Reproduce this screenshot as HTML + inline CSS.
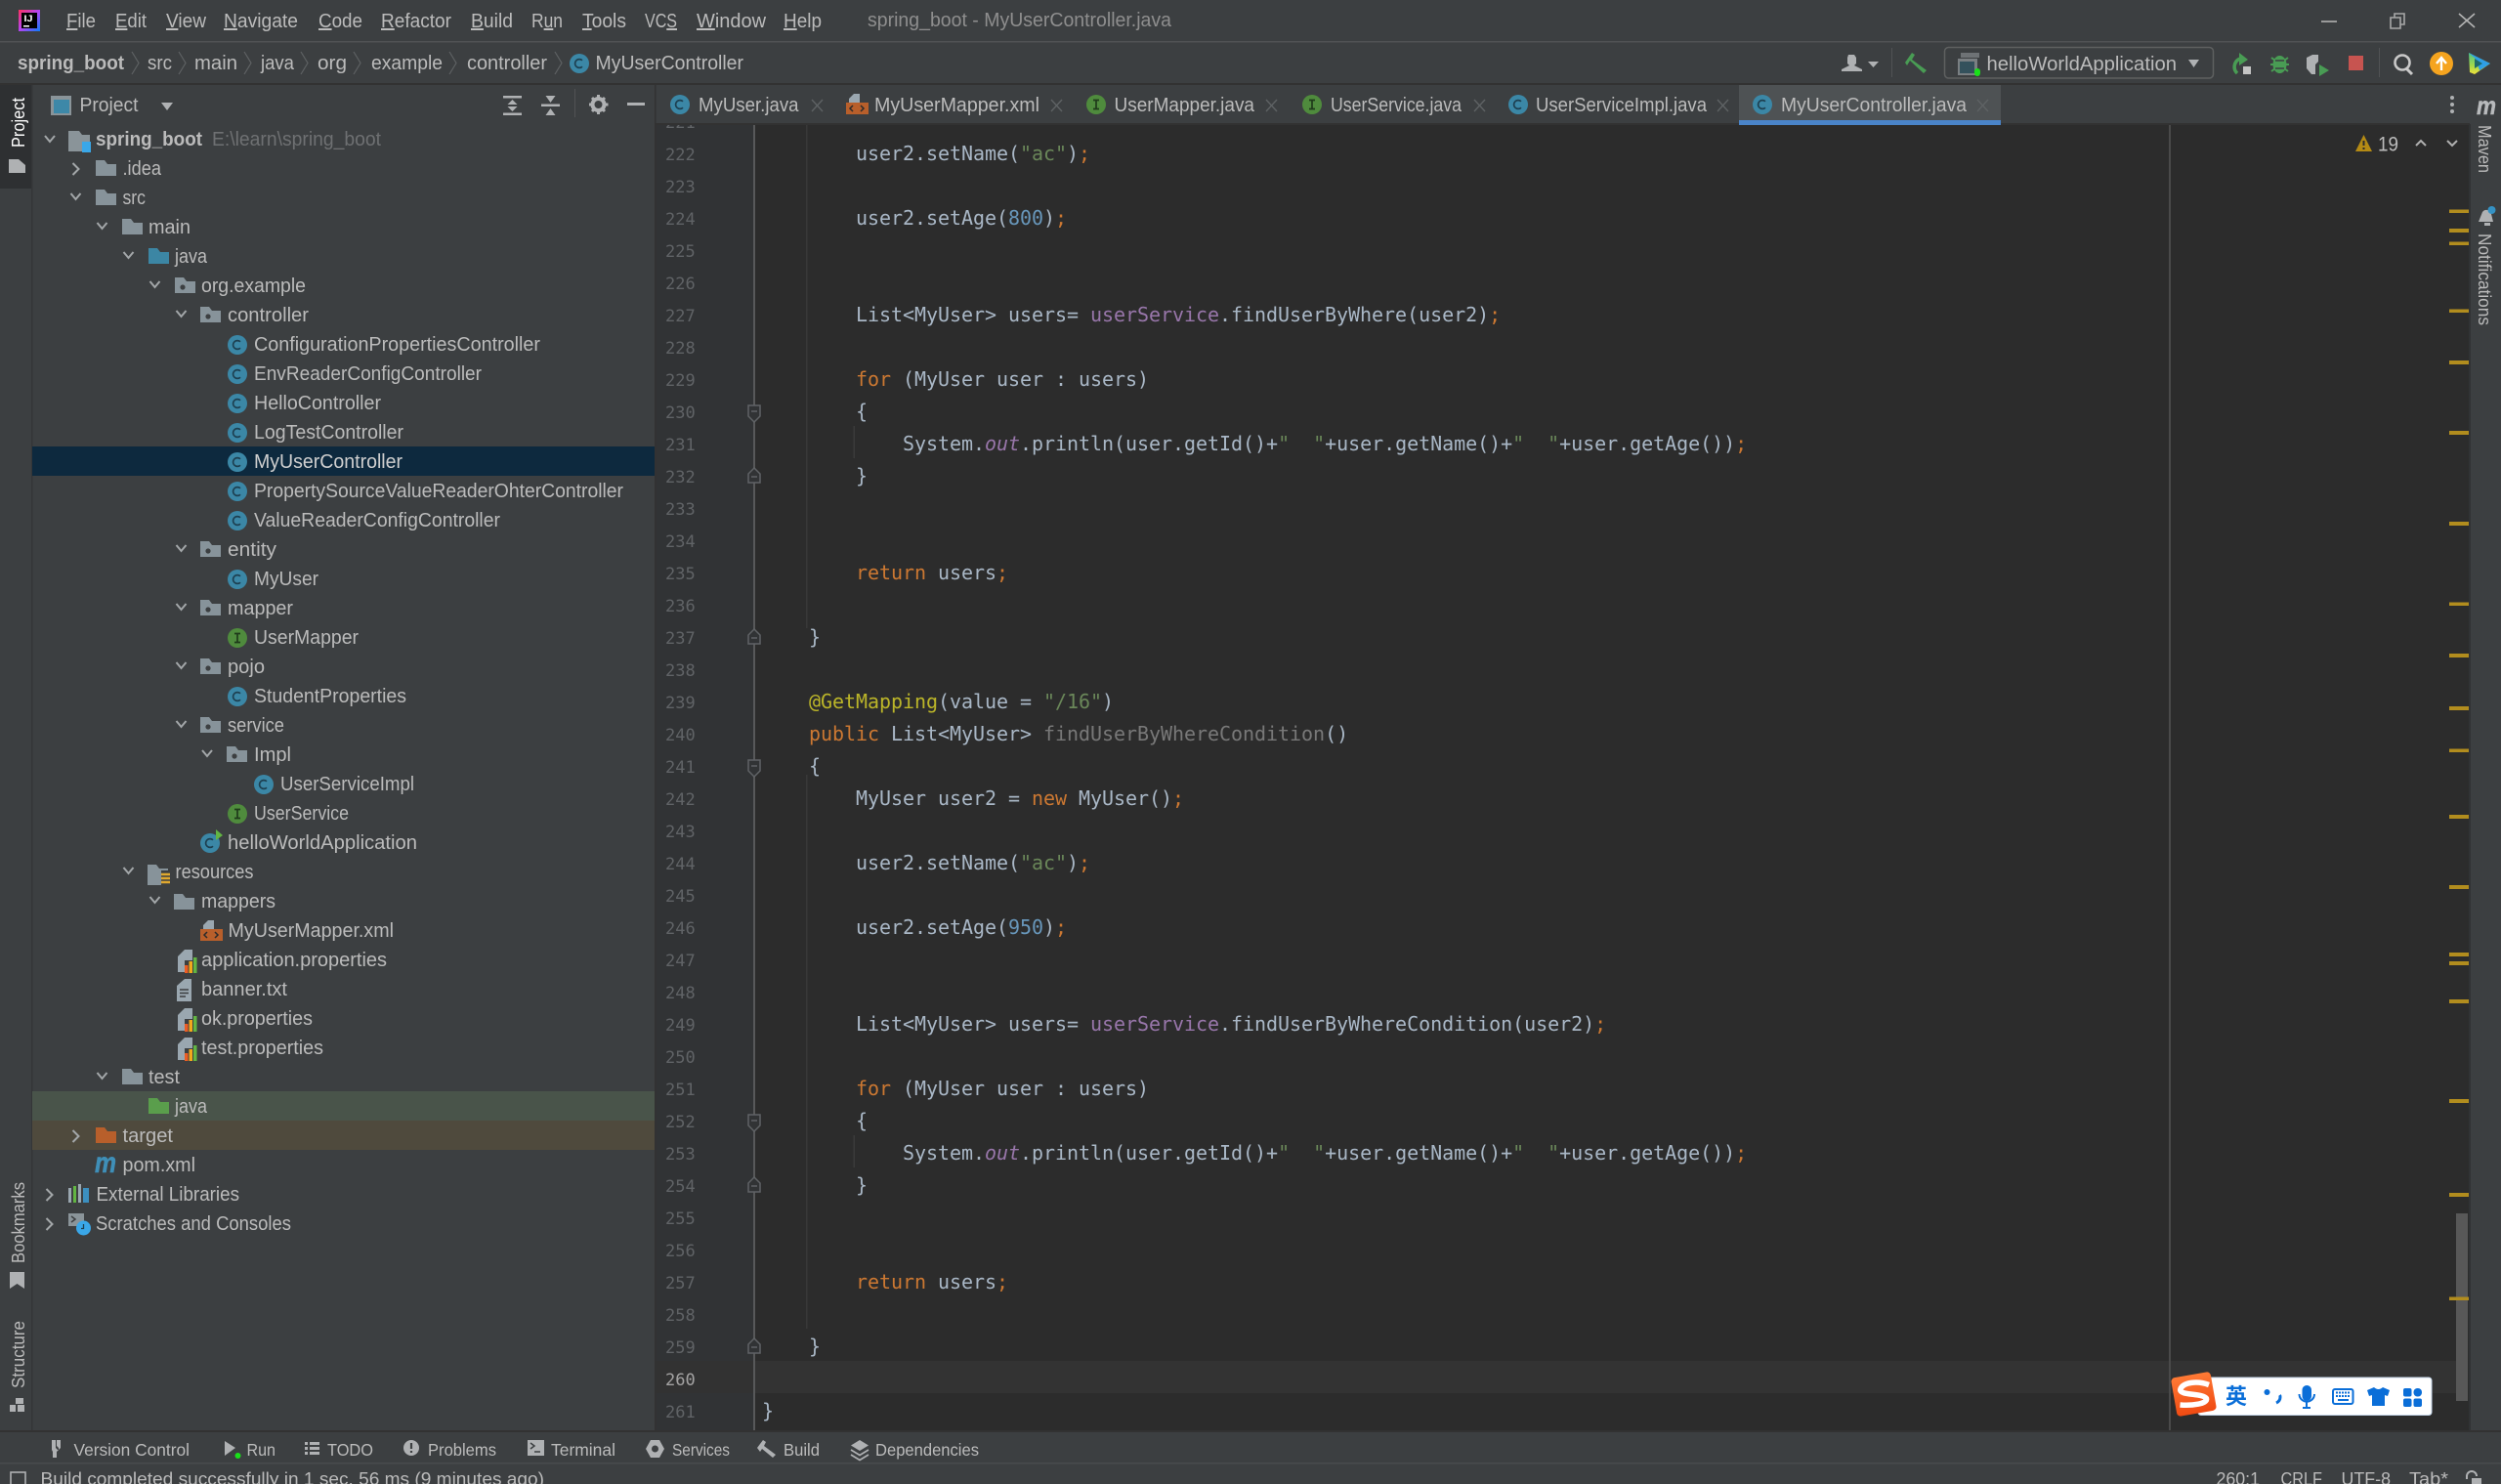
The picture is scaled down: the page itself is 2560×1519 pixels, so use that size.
<!DOCTYPE html>
<html><head><meta charset="utf-8"><title>spring_boot - MyUserController.java</title>
<style>
html,body{margin:0;padding:0;background:#3c3f41;width:2560px;height:1519px;overflow:hidden}
svg{display:block}
text{font-family:"Liberation Sans",sans-serif;font-size:20px;fill:#bbbbbb;white-space:pre}
.b{font-weight:bold}
.m{fill:#bbbbbb}
.s{font-size:17.5px}
.v{font-size:18px}
.ln{font-family:"DejaVu Sans Mono","Liberation Mono",monospace;font-size:17px;fill:#606366}
.c{font-family:"DejaVu Sans Mono","Liberation Mono",monospace;font-size:20px;fill:#a9b7c6;letter-spacing:-.04px}
.k{fill:#cc7832}.str{fill:#6a8759}.n{fill:#6897bb}.f{fill:#9876aa}.a{fill:#bbb529}.u{fill:#787878}.fi{fill:#9876aa;font-style:italic}
</style></head><body>
<svg xmlns="http://www.w3.org/2000/svg" width="2560" height="1519" viewBox="0 0 2560 1519">
<defs>
<linearGradient id="ij" x1="0" y1="0" x2="1" y2="1"><stop offset="0" stop-color="#fe315d"/><stop offset=".5" stop-color="#b345f1"/><stop offset="1" stop-color="#087cfa"/></linearGradient>
<linearGradient id="sg" x1="0" y1="0" x2="0" y2="1"><stop offset="0" stop-color="#ff7a35"/><stop offset="1" stop-color="#f04a12"/></linearGradient>
<linearGradient id="tb" x1="0" y1="0" x2="0" y2="1"><stop offset="0" stop-color="#4cc38a"/><stop offset=".6" stop-color="#a5d84a"/><stop offset="1" stop-color="#f2e23c"/></linearGradient>
<g id="ci"><circle cx="10" cy="10" r="10" fill="#3b87a6"/><path d="M13 6.8A4.4 4.4 0 1 0 13 13.2" fill="none" stroke="#1d3f50" stroke-width="1.7"/></g>
<g id="ii"><circle cx="10" cy="10" r="10" fill="#4f8b3d"/><path d="M7 5.5h6M10 5.5v9M7 14.5h6" fill="none" stroke="#1f3a1a" stroke-width="1.7"/></g>
<path id="d" d="M1 1L6 7L11 1" fill="none" stroke="#a3a7a9" stroke-width="2"/>
<path id="r" d="M1 0L7 6L1 12" fill="none" stroke="#a3a7a9" stroke-width="2"/>
<path id="fo" d="M0 0h9l3 4h9v12H0z" fill="#87939a"/>
<g id="pk"><path d="M0 0h9l3 4h9v12H0z" fill="#87939a"/><circle cx="8" cy="10" r="2.6" fill="#3c3f41"/></g>
<g id="xm"><path d="M8 0h6v9H3V5z" fill="#9aa7b0"/><rect x="0" y="9" width="23" height="12" fill="#b85f2b"/><path d="M7 12l-3 3l3 3M15 12l3 3l-3 3" fill="none" stroke="#2b2b2b" stroke-width="1.5"/></g>
<g id="pr"><path d="M8 0h8v23H1V7z" fill="#9aa7b0"/><rect x="8" y="11" width="13" height="13" fill="#3c3f41"/><rect x="8" y="16" width="3.5" height="8" fill="#ec5d24"/><rect x="12.5" y="12" width="3.5" height="12" fill="#f1a91c"/><rect x="17" y="8" width="3.5" height="16" fill="#62b543"/></g>
<g id="fa"><path d="M1 1H13V12L7 18L1 12z" fill="#313335" stroke="#606366" stroke-width="1.5"/><path d="M4 7h6" stroke="#606366" stroke-width="1.5"/></g>
<g id="fb"><path d="M7 1L13 7V16H1V7z" fill="#313335" stroke="#606366" stroke-width="1.5"/><path d="M4 10h6" stroke="#606366" stroke-width="1.5"/></g>
<path id="x" d="M0 0L11 12M11 0L0 12" stroke="#5e6264" stroke-width="1.4" fill="none"/>
<path id="chev" d="M0 0L7 11.5L0 23" fill="none" stroke="#5e6163" stroke-width="1.2"/>
</defs>

<!-- base -->
<rect width="2560" height="1519" fill="#3c3f41"/>

<!-- editor -->
<rect x="670" y="127" width="1857" height="1338" fill="#2c2c2c"/>
<rect x="670" y="127" width="102" height="1338" fill="#313335"/>
<rect x="773" y="1393" width="1753" height="33" fill="#333333"/>
<rect x="670" y="1393" width="102" height="33" fill="#323232"/>
<rect x="825" y="128" width="1.5" height="515" fill="#383838"/>
<rect x="825" y="793" width="1.5" height="567" fill="#383838"/>
<rect x="873.5" y="436" width="1.5" height="33" fill="#3a3a3a"/>
<rect x="873.5" y="1162" width="1.5" height="33" fill="#3a3a3a"/>
<rect x="2220" y="127" width="2" height="1338" fill="#4a4a4a"/>
<rect x="771" y="127" width="2" height="1338" fill="#58595a"/>
<!-- scrollbar + stripes -->
<rect x="2527" y="127" width="2" height="1338" fill="#313335"/>
<rect x="2514" y="1242" width="12" height="192" fill="#585858"/>
<g fill="#b28d1e">
<rect x="2507" y="214.500" width="20" height="3.500"/><rect x="2507" y="234" width="20" height="4"/><rect x="2507" y="247.500" width="20" height="3.500"/><rect x="2507" y="316.500" width="20" height="3.500"/><rect x="2507" y="369" width="20" height="4"/><rect x="2507" y="441" width="20" height="4"/><rect x="2507" y="534" width="20" height="4"/><rect x="2507" y="616.500" width="20" height="3.500"/><rect x="2507" y="669" width="20" height="4"/><rect x="2507" y="723" width="20" height="4"/><rect x="2507" y="766.500" width="20" height="3.500"/><rect x="2507" y="834" width="20" height="4"/><rect x="2507" y="906" width="20" height="4"/><rect x="2507" y="975" width="20" height="4"/><rect x="2507" y="984" width="20" height="4"/><rect x="2507" y="1023" width="20" height="4"/><rect x="2507" y="1125" width="20" height="4"/><rect x="2507" y="1221" width="20" height="4"/><rect x="2507" y="1327.500" width="20" height="3.500"/>
</g>

<!-- line numbers -->
<g class="ln-g">
<text class="ln" x="681" y="131">221</text><text class="ln" x="681" y="164">222</text><text class="ln" x="681" y="197">223</text><text class="ln" x="681" y="230">224</text><text class="ln" x="681" y="263">225</text><text class="ln" x="681" y="296">226</text><text class="ln" x="681" y="329">227</text><text class="ln" x="681" y="362">228</text><text class="ln" x="681" y="395">229</text><text class="ln" x="681" y="428">230</text><text class="ln" x="681" y="461">231</text><text class="ln" x="681" y="494">232</text><text class="ln" x="681" y="527">233</text><text class="ln" x="681" y="560">234</text><text class="ln" x="681" y="593">235</text><text class="ln" x="681" y="626">236</text><text class="ln" x="681" y="659">237</text><text class="ln" x="681" y="692">238</text><text class="ln" x="681" y="725">239</text><text class="ln" x="681" y="758">240</text><text class="ln" x="681" y="791">241</text><text class="ln" x="681" y="824">242</text><text class="ln" x="681" y="857">243</text><text class="ln" x="681" y="890">244</text><text class="ln" x="681" y="923">245</text><text class="ln" x="681" y="956">246</text><text class="ln" x="681" y="989">247</text><text class="ln" x="681" y="1022">248</text><text class="ln" x="681" y="1055">249</text><text class="ln" x="681" y="1088">250</text><text class="ln" x="681" y="1121">251</text><text class="ln" x="681" y="1154">252</text><text class="ln" x="681" y="1187">253</text><text class="ln" x="681" y="1220">254</text><text class="ln" x="681" y="1253">255</text><text class="ln" x="681" y="1286">256</text><text class="ln" x="681" y="1319">257</text><text class="ln" x="681" y="1352">258</text><text class="ln" x="681" y="1385">259</text><text class="ln" x="681" y="1418" style="fill:#a4a3a3">260</text><text class="ln" x="681" y="1451">261</text>
</g>

<!-- fold markers -->
<use href="#fa" x="765" y="414"/><use href="#fb" x="765" y="478"/><use href="#fb" x="765" y="643"/><use href="#fa" x="765" y="777"/><use href="#fa" x="765" y="1140"/><use href="#fb" x="765" y="1204"/><use href="#fb" x="765" y="1369"/>

<!-- code -->
<text class="c" x="876" y="164">user2.setName(<tspan class="str">"ac"</tspan>)<tspan class="k">;</tspan></text>
<text class="c" x="876" y="230">user2.setAge(<tspan class="n">800</tspan>)<tspan class="k">;</tspan></text>
<text class="c" x="876" y="329">List&lt;MyUser&gt; users= <tspan class="f">userService</tspan>.findUserByWhere(user2)<tspan class="k">;</tspan></text>
<text class="c" x="876" y="395"><tspan class="k">for</tspan> (MyUser user : users)</text>
<text class="c" x="876" y="428">{</text>
<text class="c" x="924" y="461">System.<tspan class="fi">out</tspan>.println(user.getId()+<tspan class="str">"  "</tspan>+user.getName()+<tspan class="str">"  "</tspan>+user.getAge())<tspan class="k">;</tspan></text>
<text class="c" x="876" y="494">}</text>
<text class="c" x="876" y="593"><tspan class="k">return</tspan> users<tspan class="k">;</tspan></text>
<text class="c" x="828" y="659">}</text>
<text class="c" x="828" y="725"><tspan class="a">@GetMapping</tspan>(value = <tspan class="str">"/16"</tspan>)</text>
<text class="c" x="828" y="758"><tspan class="k">public</tspan> List&lt;MyUser&gt; <tspan class="u">findUserByWhereCondition</tspan>()</text>
<text class="c" x="828" y="791">{</text>
<text class="c" x="876" y="824">MyUser user2 = <tspan class="k">new</tspan> MyUser()<tspan class="k">;</tspan></text>
<text class="c" x="876" y="890">user2.setName(<tspan class="str">"ac"</tspan>)<tspan class="k">;</tspan></text>
<text class="c" x="876" y="956">user2.setAge(<tspan class="n">950</tspan>)<tspan class="k">;</tspan></text>
<text class="c" x="876" y="1055">List&lt;MyUser&gt; users= <tspan class="f">userService</tspan>.findUserByWhereCondition(user2)<tspan class="k">;</tspan></text>
<text class="c" x="876" y="1121"><tspan class="k">for</tspan> (MyUser user : users)</text>
<text class="c" x="876" y="1154">{</text>
<text class="c" x="924" y="1187">System.<tspan class="fi">out</tspan>.println(user.getId()+<tspan class="str">"  "</tspan>+user.getName()+<tspan class="str">"  "</tspan>+user.getAge())<tspan class="k">;</tspan></text>
<text class="c" x="876" y="1220">}</text>
<text class="c" x="876" y="1319"><tspan class="k">return</tspan> users<tspan class="k">;</tspan></text>
<text class="c" x="828" y="1385">}</text>
<text class="c" x="780" y="1451">}</text>

<!-- warning indicator -->
<path d="M2419.500 138L2428 155H2411z" fill="#b48a14"/><path d="M2419.500 144v5M2419.500 151v2" stroke="#2c2c2c" stroke-width="2"/>
<text x="2434" y="154.500" textLength="21" lengthAdjust="spacingAndGlyphs" style="font-size:21.5px">19</text>
<path d="M2473 149l5-5l5 5M2505 144l5 5l5-5" fill="none" stroke="#b0b0b0" stroke-width="2"/>

<!-- tab bar (covers line 221 top) -->
<rect x="670" y="86" width="1858" height="41" fill="#3c3f41"/>
<rect x="670" y="126" width="1858" height="2" fill="#323232"/>
<rect x="1780" y="87" width="268" height="36" fill="#4e5254"/>
<rect x="1780" y="123" width="268" height="5" fill="#4a84c9"/>
<use href="#ci" x="686" y="97"/><text x="715" y="114" textLength="102.500" lengthAdjust="spacingAndGlyphs">MyUser.java</text><use href="#x" x="831" y="102"/>
<use href="#xm" x="866" y="96"/><text x="895" y="114" textLength="169" lengthAdjust="spacingAndGlyphs">MyUserMapper.xml</text><use href="#x" x="1076" y="102"/>
<use href="#ii" x="1112" y="97"/><text x="1140.500" y="114" textLength="143.500" lengthAdjust="spacingAndGlyphs">UserMapper.java</text><use href="#x" x="1296" y="102"/>
<use href="#ii" x="1333" y="97"/><text x="1362" y="114" textLength="134" lengthAdjust="spacingAndGlyphs">UserService.java</text><use href="#x" x="1509" y="102"/>
<use href="#ci" x="1544" y="97"/><text x="1572" y="114" textLength="175" lengthAdjust="spacingAndGlyphs">UserServiceImpl.java</text><use href="#x" x="1758" y="102"/>
<use href="#ci" x="1794" y="97"/><text x="1823" y="114" textLength="190" lengthAdjust="spacingAndGlyphs">MyUserController.java</text><use href="#x" x="2024" y="102"/>
<circle cx="2510" cy="100" r="2" fill="#afb1b3"/><circle cx="2510" cy="107" r="2" fill="#afb1b3"/><circle cx="2510" cy="114" r="2" fill="#afb1b3"/>

<!-- left strip -->
<rect x="0" y="86" width="32" height="107" fill="#2e3032"/>
<rect x="32" y="86" width="1.500" height="1380" fill="#343638"/>
<text class="v" transform="translate(25,151) rotate(-90)" textLength="51" lengthAdjust="spacingAndGlyphs" style="fill:#fff">Project</text>
<path d="M9 163h10l7 6v8H9z" fill="#afb1b3"/>
<text class="v" transform="translate(25,1293) rotate(-90)" textLength="83" lengthAdjust="spacingAndGlyphs">Bookmarks</text>
<path d="M10 1302h15v17l-7.500-5l-7.500 5z" fill="#afb1b3"/>
<text class="v" transform="translate(25,1421) rotate(-90)" textLength="69" lengthAdjust="spacingAndGlyphs">Structure</text>
<path d="M16 1431h8v6h-8zM10 1438h6v7h-6zM18 1438h7v7h-7z" fill="#afb1b3"/>

<!-- project panel header -->
<rect x="670" y="86" width="1.500" height="1380" fill="#323232"/>
<rect x="52" y="98" width="21" height="20" fill="#8a9499"/><rect x="55" y="102" width="16" height="14" fill="#3d88a8"/>
<text x="81.500" y="114" textLength="60" lengthAdjust="spacingAndGlyphs">Project</text>
<path d="M165 105h12l-6 8z" fill="#afb1b3"/>
<path d="M515 98h19v2.500h-19zM515 115.500h19v2.500h-19zM524.500 102l5 5h-10zM524.500 114l5-5h-10z" fill="#afb1b3"/>
<path d="M554 106.500h19v2.500h-19zM563.500 105l-5-7h10zM563.500 111l-5 7h10z" fill="#afb1b3"/>
<rect x="588" y="91" width="1" height="29" fill="#515355"/>
<circle cx="612.500" cy="107" r="6" fill="none" stroke="#afb1b3" stroke-width="4"/><path d="M612.500 97v4M612.500 113v4M603 107h3.500M619 107h3.500M606 100l2.500 2.500M619 100l-2.500 2.500M606 114l2.500-2.500M619 114l-2.500-2.500" stroke="#afb1b3" stroke-width="3"/>
<rect x="642" y="105" width="18" height="3" fill="#afb1b3"/>

<!-- tree rows -->
<rect x="33" y="457" width="637" height="30" fill="#0d293e"/>
<rect x="33" y="1117" width="637" height="30" fill="#49544a"/>
<rect x="33" y="1147" width="637" height="30" fill="#4f4a3d"/>

<use href="#d" x="45" y="138"/><path d="M70 134h11l3 4h8v17H70z" fill="#8a9499"/><rect x="84" y="145" width="9" height="11" fill="#3aa7e8"/>
<text class="b" x="98" y="149" textLength="109" lengthAdjust="spacingAndGlyphs">spring_boot</text>
<text x="217" y="149" textLength="173" lengthAdjust="spacingAndGlyphs" style="fill:#6e7072">E:\learn\spring_boot</text>
<use href="#r" x="73.500" y="167"/><use href="#fo" x="98" y="164"/><text x="125.500" y="179" textLength="39.500" lengthAdjust="spacingAndGlyphs">.idea</text>
<use href="#d" x="71.500" y="197"/><use href="#fo" x="98" y="194"/><text x="125.500" y="209" textLength="23.500" lengthAdjust="spacingAndGlyphs">src</text>
<use href="#d" x="98.500" y="227"/><use href="#fo" x="125" y="224"/><text x="152" y="239" textLength="43" lengthAdjust="spacingAndGlyphs">main</text>
<use href="#d" x="125.500" y="257"/><path d="M152 254h9l3 4h9v12h-21z" fill="#3c86a4"/><text x="179" y="269" textLength="33" lengthAdjust="spacingAndGlyphs">java</text>
<use href="#d" x="152.500" y="287"/><use href="#pk" x="179" y="284"/><text x="206" y="299" textLength="107" lengthAdjust="spacingAndGlyphs">org.example</text>
<use href="#d" x="179.500" y="317"/><use href="#pk" x="205" y="314"/><text x="233" y="329" textLength="83" lengthAdjust="spacingAndGlyphs">controller</text>
<use href="#ci" x="233" y="343"/><text x="260" y="359" textLength="293" lengthAdjust="spacingAndGlyphs">ConfigurationPropertiesController</text>
<use href="#ci" x="233" y="373"/><text x="260" y="389" textLength="233" lengthAdjust="spacingAndGlyphs">EnvReaderConfigController</text>
<use href="#ci" x="233" y="403"/><text x="260" y="419" textLength="130" lengthAdjust="spacingAndGlyphs">HelloController</text>
<use href="#ci" x="233" y="433"/><text x="260" y="449" textLength="153" lengthAdjust="spacingAndGlyphs">LogTestController</text>
<use href="#ci" x="233" y="463"/><text x="260" y="479" textLength="152" lengthAdjust="spacingAndGlyphs" style="fill:#cfcfcf">MyUserController</text>
<use href="#ci" x="233" y="493"/><text x="260" y="509" textLength="378" lengthAdjust="spacingAndGlyphs">PropertySourceValueReaderOhterController</text>
<use href="#ci" x="233" y="523"/><text x="260" y="539" textLength="252" lengthAdjust="spacingAndGlyphs">ValueReaderConfigController</text>
<use href="#d" x="179.500" y="557"/><use href="#pk" x="205" y="554"/><text x="233" y="569" textLength="50" lengthAdjust="spacingAndGlyphs">entity</text>
<use href="#ci" x="233" y="583"/><text x="260" y="599" textLength="66" lengthAdjust="spacingAndGlyphs">MyUser</text>
<use href="#d" x="179.500" y="617"/><use href="#pk" x="205" y="614"/><text x="233" y="629" textLength="67" lengthAdjust="spacingAndGlyphs">mapper</text>
<use href="#ii" x="233" y="643"/><text x="260" y="659" textLength="107" lengthAdjust="spacingAndGlyphs">UserMapper</text>
<use href="#d" x="179.500" y="677"/><use href="#pk" x="205" y="674"/><text x="233" y="689" textLength="38" lengthAdjust="spacingAndGlyphs">pojo</text>
<use href="#ci" x="233" y="703"/><text x="260" y="719" textLength="156" lengthAdjust="spacingAndGlyphs">StudentProperties</text>
<use href="#d" x="179.500" y="737"/><use href="#pk" x="205" y="734"/><text x="233" y="749" textLength="58" lengthAdjust="spacingAndGlyphs">service</text>
<use href="#d" x="206" y="767"/><use href="#pk" x="232" y="764"/><text x="260" y="779" textLength="38" lengthAdjust="spacingAndGlyphs">Impl</text>
<use href="#ci" x="260" y="793"/><text x="287" y="809" textLength="137" lengthAdjust="spacingAndGlyphs">UserServiceImpl</text>
<use href="#ii" x="233" y="823"/><text x="260" y="839" textLength="97" lengthAdjust="spacingAndGlyphs">UserService</text>
<use href="#ci" x="205" y="853"/><path d="M221 849l7 6l-7 5z" fill="#62b543"/><text x="233" y="869" textLength="194" lengthAdjust="spacingAndGlyphs">helloWorldApplication</text>
<use href="#d" x="125.500" y="887"/><path d="M151 885h9l3 4h9v17h-21z" fill="#87939a"/><rect x="165" y="891" width="9" height="16" fill="#3c3f41"/><path d="M165 895h9M165 899h9M165 903h9" stroke="#e0a82e" stroke-width="2.400"/><text x="179.500" y="899" textLength="80" lengthAdjust="spacingAndGlyphs">resources</text>
<use href="#d" x="152.500" y="917"/><use href="#fo" x="178" y="915"/><text x="206" y="929" textLength="76" lengthAdjust="spacingAndGlyphs">mappers</text>
<use href="#xm" x="205" y="942"/><text x="233.500" y="959" textLength="169.500" lengthAdjust="spacingAndGlyphs">MyUserMapper.xml</text>
<use href="#pr" x="181" y="972"/><text x="206" y="989" textLength="190" lengthAdjust="spacingAndGlyphs">application.properties</text>
<path d="M189 1002h7v23h-15v-16z" fill="#9aa7b0"/><path d="M184 1013h9M184 1016.500h9M184 1020h6" stroke="#3c3f41" stroke-width="1.500"/><text x="206" y="1019" textLength="88" lengthAdjust="spacingAndGlyphs">banner.txt</text>
<use href="#pr" x="181" y="1032"/><text x="206" y="1049" textLength="114" lengthAdjust="spacingAndGlyphs">ok.properties</text>
<use href="#pr" x="181" y="1062"/><text x="206" y="1079" textLength="125" lengthAdjust="spacingAndGlyphs">test.properties</text>
<use href="#d" x="98.500" y="1097"/><use href="#fo" x="125" y="1094"/><text x="152" y="1109" textLength="32" lengthAdjust="spacingAndGlyphs">test</text>
<path d="M152 1124h9l3 4h9v12h-21z" fill="#5a9e4c"/><text x="179" y="1139" textLength="33" lengthAdjust="spacingAndGlyphs">java</text>
<use href="#r" x="73.500" y="1157"/><path d="M98 1154h9l3 4h9v12H98z" fill="#b85f2b"/><text x="125.500" y="1169" textLength="51.500" lengthAdjust="spacingAndGlyphs">target</text>
<text class="b" x="97" y="1200" textLength="22" lengthAdjust="spacingAndGlyphs" style="font-size:30px;font-style:italic;fill:#3f8fb8;stroke:#3f8fb8;stroke-width:.6">m</text><text x="125.500" y="1199" textLength="74.500" lengthAdjust="spacingAndGlyphs">pom.xml</text>
<use href="#r" x="46.500" y="1217"/><path d="M70 1216h3v15h-3z" fill="#9aa7b0"/><path d="M75 1214h3v17h-3z" fill="#62b543"/><path d="M80 1212h3v19h-3z" fill="#9aa7b0"/><path d="M85 1216h6v15h-6z" fill="#3c8fbf"/><text x="98.500" y="1229" textLength="146.500" lengthAdjust="spacingAndGlyphs">External Libraries</text>
<use href="#r" x="46.500" y="1247"/><path d="M70 1242h16v13H70z" fill="#8a9499"/><path d="M73 1245l4 3l-4 3" fill="none" stroke="#3c3f41" stroke-width="1.500"/><circle cx="85.500" cy="1257" r="7.500" fill="#3aa7e8"/><path d="M85.500 1253v4.500h-2.500" fill="none" stroke="#1d3f50" stroke-width="1.300"/><text x="98" y="1259" textLength="200" lengthAdjust="spacingAndGlyphs">Scratches and Consoles</text>

<!-- title bar -->
<rect x="0" y="0" width="2560" height="42" fill="#3c3f41"/>
<rect x="0" y="42" width="2560" height="1.500" fill="#505254"/>
<rect x="19" y="10" width="22" height="22" fill="url(#ij)"/><rect x="22" y="13" width="16" height="16" fill="#000"/>
<text class="b" x="24.500" y="22" textLength="9" lengthAdjust="spacingAndGlyphs" style="font-size:9px;fill:#fff">IJ</text><rect x="24" y="26" width="6" height="1.500" fill="#fff"/>
<g class="menu">
<text class="m" x="68" y="28" textLength="30" lengthAdjust="spacingAndGlyphs"><tspan text-decoration="underline">F</tspan>ile</text>
<text class="m" x="118" y="28" textLength="32" lengthAdjust="spacingAndGlyphs"><tspan text-decoration="underline">E</tspan>dit</text>
<text class="m" x="170" y="28" textLength="41" lengthAdjust="spacingAndGlyphs"><tspan text-decoration="underline">V</tspan>iew</text>
<text class="m" x="229" y="28" textLength="76" lengthAdjust="spacingAndGlyphs"><tspan text-decoration="underline">N</tspan>avigate</text>
<text class="m" x="326" y="28" textLength="45" lengthAdjust="spacingAndGlyphs"><tspan text-decoration="underline">C</tspan>ode</text>
<text class="m" x="390" y="28" textLength="72" lengthAdjust="spacingAndGlyphs"><tspan text-decoration="underline">R</tspan>efactor</text>
<text class="m" x="482" y="28" textLength="43" lengthAdjust="spacingAndGlyphs"><tspan text-decoration="underline">B</tspan>uild</text>
<text class="m" x="544" y="28" textLength="32" lengthAdjust="spacingAndGlyphs">R<tspan text-decoration="underline">u</tspan>n</text>
<text class="m" x="596" y="28" textLength="45" lengthAdjust="spacingAndGlyphs"><tspan text-decoration="underline">T</tspan>ools</text>
<text class="m" x="660" y="28" textLength="33" lengthAdjust="spacingAndGlyphs">VC<tspan text-decoration="underline">S</tspan></text>
<text class="m" x="713" y="28" textLength="71" lengthAdjust="spacingAndGlyphs"><tspan text-decoration="underline">W</tspan>indow</text>
<text class="m" x="802" y="28" textLength="39" lengthAdjust="spacingAndGlyphs"><tspan text-decoration="underline">H</tspan>elp</text>
</g>
<text x="888" y="27" textLength="311" lengthAdjust="spacingAndGlyphs" style="fill:#8e8e8e">spring_boot - MyUserController.java</text>
<rect x="2376" y="21" width="16" height="2" fill="#9a9a9a"/>
<path d="M2447 18h10v11h-10zM2451 18v-4h10v11h-4" fill="none" stroke="#a8a8a8" stroke-width="1.600"/>
<path d="M2517 14L2533 28M2533 14L2517 28" stroke="#b4b4b4" stroke-width="1.600"/>

<!-- nav bar -->
<rect x="0" y="85" width="2560" height="2" fill="#323232"/>
<text class="b" x="18" y="71" textLength="109" lengthAdjust="spacingAndGlyphs">spring_boot</text>
<use href="#chev" x="135" y="53"/>
<text x="151" y="71" textLength="25" lengthAdjust="spacingAndGlyphs">src</text><use href="#chev" x="183" y="53"/>
<text x="199" y="71" textLength="44" lengthAdjust="spacingAndGlyphs">main</text><use href="#chev" x="250" y="53"/>
<text x="267" y="71" textLength="34" lengthAdjust="spacingAndGlyphs">java</text><use href="#chev" x="308" y="53"/>
<text x="325" y="71" textLength="30" lengthAdjust="spacingAndGlyphs">org</text><use href="#chev" x="362" y="53"/>
<text x="380" y="71" textLength="73" lengthAdjust="spacingAndGlyphs">example</text><use href="#chev" x="460" y="53"/>
<text x="478" y="71" textLength="82" lengthAdjust="spacingAndGlyphs">controller</text><use href="#chev" x="568" y="53"/>
<use href="#ci" x="583" y="55"/>
<text x="609.500" y="71" textLength="151.500" lengthAdjust="spacingAndGlyphs">MyUserController</text>

<!-- toolbar right -->
<path d="M1892 56h6l2 3v6l-2 2l8 4v2h-21v-2l8-4l-2-2v-6z" fill="#afb1b3"/><path d="M1912 63h11l-5.500 6z" fill="#afb1b3"/>
<rect x="1936" y="49" width="1" height="30" fill="#515355"/>
<path d="M1950 64l7-10l3 2l-3 5l15 11l-3 3l-14-13l-3 5z" fill="#499c54"/>
<rect x="1990.500" y="48.500" width="275" height="31.500" rx="4" fill="#3c3f41" stroke="#5e6060" stroke-width="1.500"/>
<rect x="2007" y="54" width="19" height="5" fill="#6e7275"/><rect x="2004" y="60" width="20" height="17" fill="#7a7f82"/><rect x="2006" y="63" width="15" height="12" fill="#34515c"/><rect x="2021" y="70" width="6" height="8" rx="3" fill="#19e019"/>
<text x="2033.500" y="72" textLength="194.500" lengthAdjust="spacingAndGlyphs">helloWorldApplication</text>
<path d="M2240 61h11l-5.500 8z" fill="#afb1b3"/>
<path d="M2290 75a9 9 0 0 1 3-15" fill="none" stroke="#499c54" stroke-width="3.500"/><path d="M2292 54l9 7l-9 6z" fill="#499c54"/><rect x="2296" y="68" width="8" height="8" fill="#c4c4c4"/>
<ellipse cx="2333.500" cy="66" rx="7" ry="9" fill="#499c54"/><path d="M2325 59l4 3M2342 59l-4 3M2324 66h19M2325 73l4-3M2342 73l-4-3M2333.500 58v17" stroke="#499c54" stroke-width="2"/><path d="M2329 62h9M2329 70h9" stroke="#3c3f41" stroke-width="1.500"/>
<path d="M2361 59l6-3h6v7l-3 3v10l-4 0l-5-6z" fill="#afb1b3"/><path d="M2374 66l10 6l-10 6z" fill="#499c54"/>
<rect x="2404" y="57" width="15" height="15" fill="#c75450"/>
<rect x="2435" y="49" width="1" height="30" fill="#515355"/>
<circle cx="2459" cy="64" r="7.500" fill="none" stroke="#c9c9c9" stroke-width="2.600"/><path d="M2463 70l6 6" stroke="#c9c9c9" stroke-width="3"/>
<ellipse cx="2499" cy="65" rx="12" ry="12" fill="#f5a41f"/><path d="M2499 72V60M2494 65l5-6l5 6" fill="none" stroke="#fff" stroke-width="2.400"/>
<!-- multi-colour plugin logo -->
<path d="M2527 54L2549 65L2533 76L2528 74z" fill="url(#tb)"/>
<path d="M2527 54L2549 65L2538 72L2534 60z" fill="#2f9fe6"/>
<path d="M2533 60L2541 65L2533 70z" fill="#1f6a6a"/>

<!-- right strip -->
<text class="b" x="2535" y="117" textLength="20" lengthAdjust="spacingAndGlyphs" style="font-size:26px;font-style:italic;fill:#b8babc;stroke:#b8babc;stroke-width:.5">m</text>
<text class="v" transform="translate(2537,128) rotate(90)" textLength="49" lengthAdjust="spacingAndGlyphs">Maven</text>
<path d="M2541 217a5 5 0 0 1 9 2l2 8h-15z" fill="#afb1b3"/><rect x="2543" y="228" width="6" height="3" fill="#afb1b3"/><circle cx="2550.500" cy="215" r="4" fill="#3592c4"/>
<text class="v" transform="translate(2537,239) rotate(90)" textLength="94" lengthAdjust="spacingAndGlyphs">Notifications</text>

<!-- bottom tool bar -->
<rect x="0" y="1464" width="2560" height="2" fill="#323232"/>
<rect x="0" y="1466" width="2560" height="31" fill="#3c3f41"/>
<rect x="0" y="1497" width="2560" height="1.500" fill="#494b4d"/>
<path d="M53 1474h4v8l3 3v-3l-2-2v-6h4v8l-4 4v6h-4v-6l-1-2z" fill="#afb1b3"/>
<text class="s" x="75.500" y="1490" textLength="118.500" lengthAdjust="spacingAndGlyphs">Version Control</text>
<path d="M230 1475l11 7l-11 8z" fill="#afb1b3"/><circle cx="243.500" cy="1490" r="3" fill="#19e019"/>
<text class="s" x="252.500" y="1490" textLength="29.500" lengthAdjust="spacingAndGlyphs">Run</text>
<path d="M312 1476h3v3h-3zM317 1476h10v3h-10zM312 1481h3v3h-3zM317 1481h10v3h-10zM312 1486h3v3h-3zM317 1486h10v3h-10z" fill="#afb1b3"/>
<text class="s" x="335" y="1490" textLength="47" lengthAdjust="spacingAndGlyphs">TODO</text>
<circle cx="421" cy="1482" r="8" fill="#afb1b3"/><path d="M421 1477v6M421 1485v2" stroke="#3c3f41" stroke-width="2.200"/>
<text class="s" x="438" y="1490" textLength="70" lengthAdjust="spacingAndGlyphs">Problems</text>
<rect x="540" y="1474" width="17" height="16" fill="#afb1b3"/><path d="M543 1477l4 3l-4 3M547 1486h6" fill="none" stroke="#3c3f41" stroke-width="1.500"/>
<text class="s" x="564" y="1490" textLength="66" lengthAdjust="spacingAndGlyphs">Terminal</text>
<path d="M666 1474h9l5 9l-5 9h-9l-5-9z" fill="#afb1b3"/><circle cx="670.500" cy="1483" r="3.500" fill="#3c3f41"/>
<text class="s" x="688" y="1490" textLength="59" lengthAdjust="spacingAndGlyphs">Services</text>
<path d="M775 1482l6-8l3 2l-2 4l12 9l-3 3l-11-9l-2 3z" fill="#afb1b3"/>
<text class="s" x="802" y="1490" textLength="37" lengthAdjust="spacingAndGlyphs">Build</text>
<path d="M880 1474l9 5.500l-9 5.500l-9-5.500z" fill="#afb1b3"/><path d="M871 1484l9 5.500l9-5.500M871 1489l9 5.500l9-5.500" fill="none" stroke="#afb1b3" stroke-width="1.700"/>
<text class="s" x="896" y="1490" textLength="106" lengthAdjust="spacingAndGlyphs">Dependencies</text>

<!-- status bar -->
<rect x="11" y="1507" width="15" height="14" fill="none" stroke="#afb1b3" stroke-width="1.600"/>
<text class="s" x="41.500" y="1520" textLength="515.500" lengthAdjust="spacingAndGlyphs" style="font-size:18px">Build completed successfully in 1 sec, 56 ms (9 minutes ago)</text>
<text class="s" x="2268.500" y="1520" textLength="44.500" lengthAdjust="spacingAndGlyphs" style="font-size:18px">260:1</text>
<text class="s" x="2334.500" y="1520" textLength="42.500" lengthAdjust="spacingAndGlyphs" style="font-size:18px">CRLF</text>
<text class="s" x="2396.500" y="1520" textLength="50.500" lengthAdjust="spacingAndGlyphs" style="font-size:18px">UTF-8</text>
<text class="s" x="2466" y="1520" textLength="40" lengthAdjust="spacingAndGlyphs" style="font-size:18px">Tab*</text>
<path d="M2525 1514v-3a5 5 0 0 1 10 0" fill="none" stroke="#afb1b3" stroke-width="2"/><rect x="2530" y="1513" width="10" height="8" fill="#afb1b3"/>

<!-- IME bar -->
<rect x="2250" y="1410" width="239" height="38.500" rx="3" fill="#fff" stroke="#c4d6ea" stroke-width="1"/>
<g transform="rotate(-10 2245.500 1427)"><rect x="2225" y="1407" width="41" height="40" rx="4" fill="url(#sg)"/></g>
<path d="M2261 1417.500C2249 1413 2235 1415 2232 1421.500C2229 1429 2255 1425.500 2258.500 1431.500C2260 1437 2243 1439 2231.500 1438" fill="none" stroke="#fff" stroke-width="5.500"/>
<text class="b" x="2278" y="1437" style="font-family:'Liberation Sans','Noto Sans CJK SC',sans-serif;font-size:22px;fill:#0a6ed8">英</text>
<circle cx="2320.500" cy="1425" r="3" fill="#0a6ed8"/><path d="M2333.500 1428a3 3 0 0 1 0.500 2q0 4 -4 6" fill="none" stroke="#0a6ed8" stroke-width="3"/>
<rect x="2356.500" y="1418" width="9.500" height="16" rx="4.700" fill="#0a6ed8"/><path d="M2353.500 1427a7.700 7.700 0 0 0 15.500 0M2361 1435v5M2357 1441h8" fill="none" stroke="#0a6ed8" stroke-width="2"/>
<rect x="2388" y="1422" width="20.500" height="15" rx="2" fill="none" stroke="#0a6ed8" stroke-width="2"/><path d="M2391 1425.500h15M2391 1429h15" stroke="#0a6ed8" stroke-width="2" stroke-dasharray="2 1"/><rect x="2393" y="1432" width="11" height="2" fill="#0a6ed8"/>
<path d="M2430 1420l-7 3l2 6l3-1v11h13v-11l3 1l2-6l-7-3q-4.500 4 -9 0z" fill="#0a6ed8"/>
<rect x="2460" y="1421" width="8.500" height="8.500" rx="2" fill="#0a6ed8"/><rect x="2470.500" y="1421" width="8.500" height="8.500" rx="4" fill="#0a6ed8"/><rect x="2460" y="1431.500" width="8.500" height="8.500" rx="2" fill="#0a6ed8"/><rect x="2470.500" y="1431.500" width="8.500" height="8.500" rx="2" fill="#0a6ed8"/>
</svg>
</body></html>
